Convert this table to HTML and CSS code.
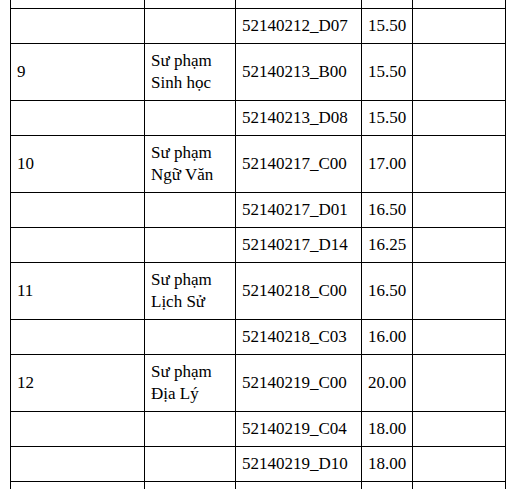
FILE: index.html
```html
<!DOCTYPE html>
<html lang="vi">
<head>
<meta charset="utf-8">
<title>Bảng điểm chuẩn</title>
<link rel="stylesheet" href="styles.css">
</head>
<body>
<div class="page">
<table class="scores">
  <colgroup>
    <col class="c1"><col class="c2"><col class="c3"><col class="c4"><col class="c5">
  </colgroup>
  <tbody>
    <tr class="top"><td></td><td></td><td></td><td></td><td></td></tr>
    <tr class="one"><td></td><td></td><td>52140212_D07</td><td>15.50</td><td></td></tr>
    <tr class="two"><td>9</td><td>Sư phạm<br>Sinh học</td><td>52140213_B00</td><td>15.50</td><td></td></tr>
    <tr class="one"><td></td><td></td><td>52140213_D08</td><td>15.50</td><td></td></tr>
    <tr class="two"><td>10</td><td>Sư phạm<br>Ngữ Văn</td><td>52140217_C00</td><td>17.00</td><td></td></tr>
    <tr class="one"><td></td><td></td><td>52140217_D01</td><td>16.50</td><td></td></tr>
    <tr class="one"><td></td><td></td><td>52140217_D14</td><td>16.25</td><td></td></tr>
    <tr class="two"><td>11</td><td>Sư phạm<br>Lịch Sử</td><td>52140218_C00</td><td>16.50</td><td></td></tr>
    <tr class="one"><td></td><td></td><td>52140218_C03</td><td>16.00</td><td></td></tr>
    <tr class="two"><td>12</td><td>Sư phạm<br>Địa Lý</td><td>52140219_C00</td><td>20.00</td><td></td></tr>
    <tr class="one"><td></td><td></td><td>52140219_C04</td><td>18.00</td><td></td></tr>
    <tr class="one"><td></td><td></td><td>52140219_D10</td><td>18.00</td><td></td></tr>
    <tr class="one"><td></td><td></td><td></td><td></td><td></td></tr>
  </tbody>
</table>
</div>
</body>
</html>
```
FILE: styles.css
```css
html, body {
  margin: 0;
  padding: 0;
  background: #ffffff;
  overflow: hidden;
}
.page {
  width: 515px;
  height: 489px;
  overflow: hidden;
  padding-left: 10px;
  box-sizing: border-box;
}
.scores {
  border-collapse: collapse;
  table-layout: fixed;
  width: 495px;
  font-family: "Liberation Serif", "Times New Roman", serif;
  font-size: 17px;
  line-height: 22px;
  color: #000000;
}
.c1 { width: 134px; }
.c2 { width: 91px; }
.c3 { width: 126px; }
.c4 { width: 51px; }
.c5 { width: 93px; }
.scores td {
  border: 1px solid #000000;
  padding: 0 5px 0 6px;
  vertical-align: middle;
  white-space: nowrap;
  overflow: hidden;
}
.scores tr.top td {
  border-top: 0;
  height: 8px;
  padding: 0;
}
.scores tr.one td { height: 34px; }
.scores tr.two td { height: 56px; }
```
